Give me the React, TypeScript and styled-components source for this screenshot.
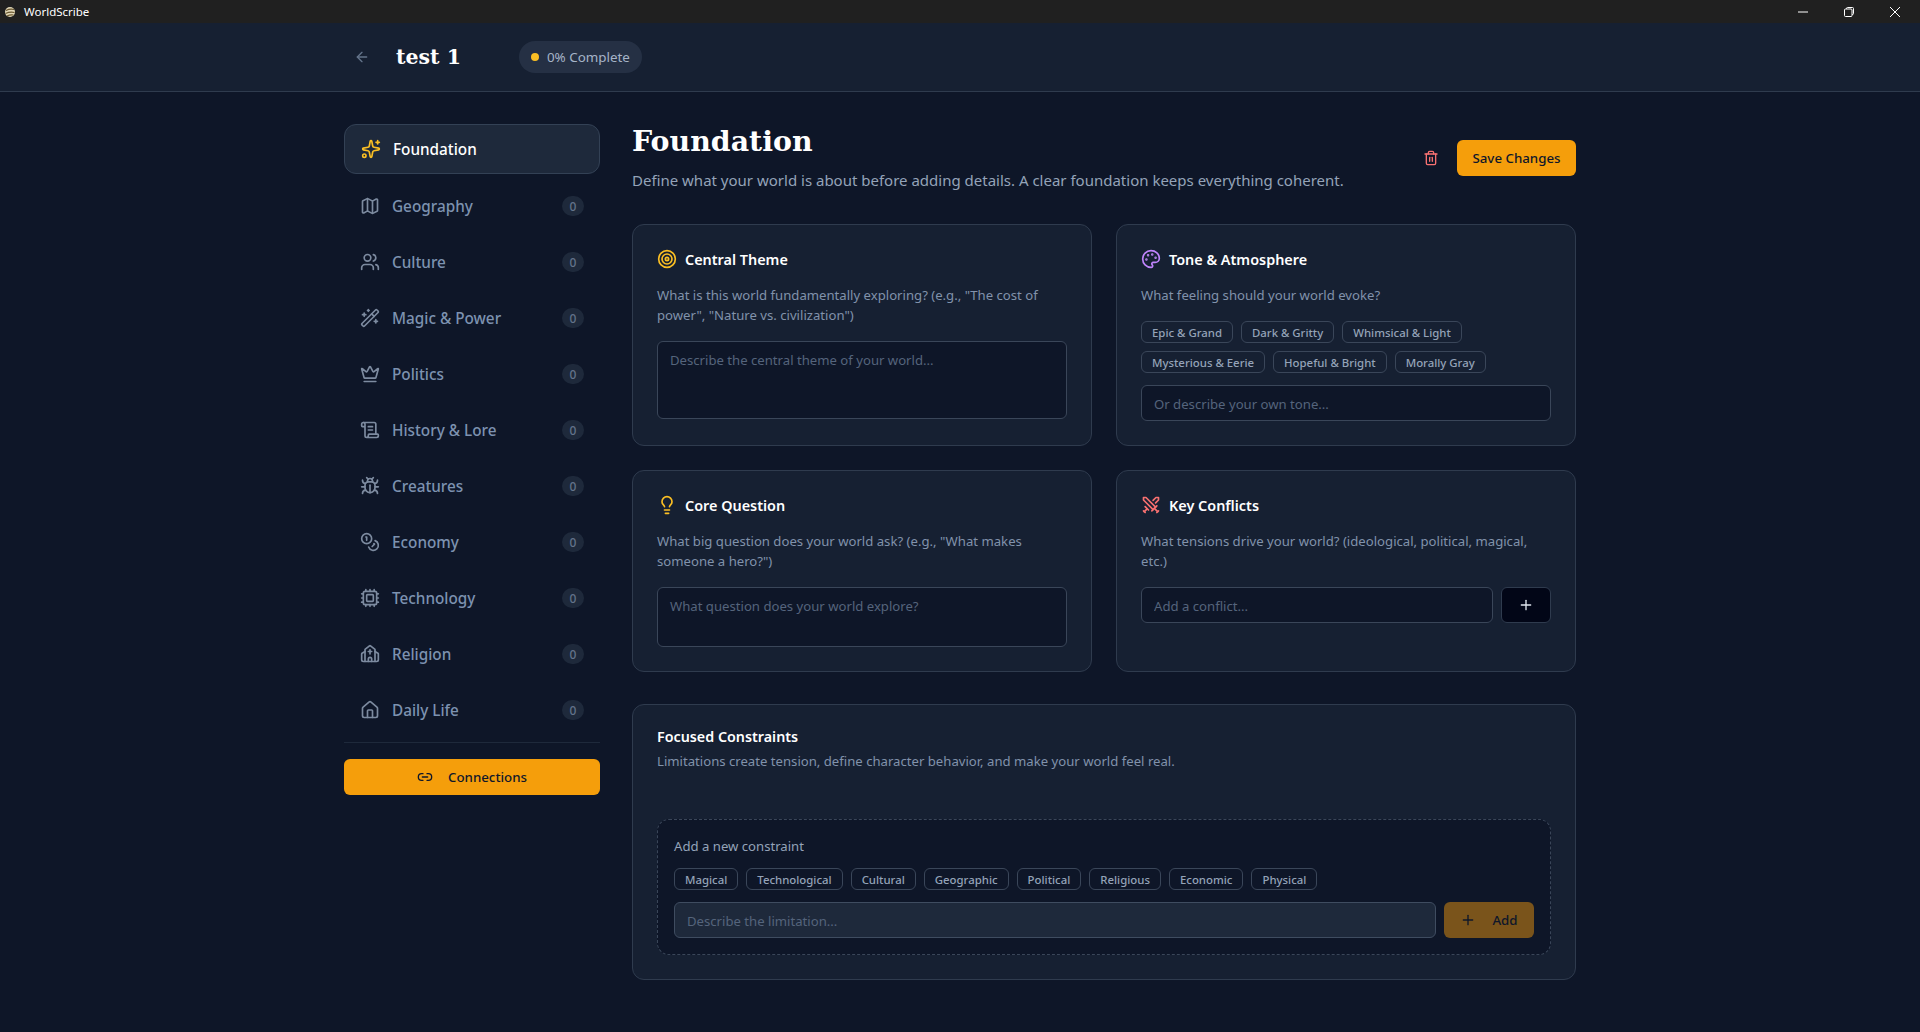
import React from 'react';
import styled, { createGlobalStyle } from 'styled-components';
import {
  ArrowLeft, Sparkles, Map, Users, WandSparkles, Crown, ScrollText, Bug, Coins, Cpu, Church, House,
  Link2, Target, Palette, Lightbulb, Swords, Plus, Trash2,
} from 'lucide-react';

const sans = `"Noto Sans", "Open Sans", sans-serif`;
const serif = `"DejaVu Serif", "Liberation Serif", serif`;

const Global = createGlobalStyle`
  html, body { margin: 0; height: 100%; background: #0e1628; }
  * { box-sizing: border-box; }
  body { font-family: ${sans}; overflow: hidden; }
  input::placeholder, textarea::placeholder { color: #55647c; opacity: 1; }
`;

const Shell = styled.div`
  height: 100vh;
  display: flex;
  flex-direction: column;
  background: #0e1628;
`;

const TitleBar = styled.div`
  height: 23px;
  flex: none;
  background: #202020;
  display: flex;
  align-items: center;
  padding: 0 2px 0 4px;
  color: #fff;
  font-size: 11.5px;
`;

const AppName = styled.span`
  margin-left: 8px;
  flex: 1;
`;

const WinButton = styled.div`
  width: 46px;
  height: 23px;
  display: flex;
  align-items: center;
  justify-content: center;
`;

const Header = styled.header`
  height: 69px;
  flex: none;
  background: #162032;
  border-bottom: 1px solid #2f3b4e;
  display: flex;
  justify-content: center;
`;

const HeaderInner = styled.div`
  width: 1232px;
  display: flex;
  align-items: center;
  padding-left: 10px;
`;

const BackIcon = styled(ArrowLeft)`
  color: #64748b;
`;

const WorldTitle = styled.h1`
  margin: 0 0 0 26px;
  font-family: ${serif};
  font-size: 20.5px;
  font-weight: 700;
  color: #fff;
`;

const ProgressPill = styled.div`
  margin-left: 58px;
  height: 32px;
  width: 123px;
  border-radius: 16px;
  background: #253044;
  display: flex;
  align-items: center;
  gap: 8px;
  padding-left: 12px;
  color: #a5b4c8;
  font-size: 13.4px;
`;

const Dot = styled.span`
  width: 8px;
  height: 8px;
  border-radius: 50%;
  background: #fbbf24;
`;

const Body = styled.div`
  width: 1232px;
  margin: 32px auto 0;
  display: grid;
  grid-template-columns: 256px 944px;
  gap: 32px;
`;

const Sidebar = styled.nav`
  display: flex;
  flex-direction: column;
  gap: 8px;
`;

const NavItem = styled.div<{ $active?: boolean }>`
  height: ${p => (p.$active ? '50px' : '48px')};
  border-radius: 12px;
  display: flex;
  align-items: center;
  gap: 12px;
  padding: 0 16px;
  font-size: 15.3px;
  font-weight: 500;
  color: ${p => (p.$active ? '#fff' : '#7d92b0')};
  background: ${p => (p.$active ? '#1e293b' : 'transparent')};
  border: ${p => (p.$active ? '1px solid #334155' : 'none')};
  svg { flex: none; color: ${p => (p.$active ? '#fbbf24' : '#7d8ba0')}; }
`;

const NavLabel = styled.span`
  flex: 1;
`;

const CountBadge = styled.span`
  width: 22px;
  height: 20px;
  border-radius: 10px;
  background: #1e293b;
  color: #64748b;
  font-size: 12px;
  display: flex;
  align-items: center;
  justify-content: center;
`;

const SideDivider = styled.div`
  height: 1px;
  background: #1e293b;
  margin: 0 0 8px;
`;

const PrimaryButton = styled.button`
  height: 36px;
  border: none;
  border-radius: 6px;
  background: #f59e0b;
  color: #0f172a;
  font-family: ${sans};
  font-size: 13.3px;
  font-weight: 500;
  display: flex;
  align-items: center;
  justify-content: center;
`;

const ConnectionsButton = styled(PrimaryButton)`
  gap: 15px;
`;

const Main = styled.main`
  display: flex;
  flex-direction: column;
`;

const PageHead = styled.div`
  height: 100px;
  display: flex;
  justify-content: space-between;
`;

const PageTitle = styled.h2`
  margin: 0;
  font-family: ${serif};
  font-size: 28.4px;
  line-height: 35px;
  font-weight: 700;
  color: #fff;
`;

const PageSub = styled.p`
  margin: 9px 0 0;
  font-size: 15px;
  line-height: 24px;
  color: #94a3b8;
`;

const PageActions = styled.div`
  display: flex;
  align-items: center;
  gap: 18px;
  height: 36px;
  margin-top: 16px;
`;

const SaveButton = styled(PrimaryButton)`
  width: 119px;
`;

const TrashIcon = styled(Trash2)`
  color: #f87171;
`;

const CardGrid = styled.div`
  display: grid;
  grid-template-columns: 460px 460px;
  gap: 24px;
`;

const Card = styled.section`
  background: #162032;
  border: 1px solid #2f3b4e;
  border-radius: 12px;
  padding: 24px;
`;

const CardTitle = styled.div`
  display: flex;
  align-items: center;
  gap: 8px;
  height: 20px;
  font-size: 14.4px;
  font-weight: 600;
  color: #fff;
`;

const CardDesc = styled.p`
  margin: 16px 0 16px;
  font-size: 13.15px;
  line-height: 20px;
  color: #8192ab;
`;

const Area = styled.textarea<{ $h: number }>`
  display: block;
  width: 100%;
  height: ${p => p.$h}px;
  resize: none;
  background: #0e1628;
  border: 1px solid #3a4659;
  border-radius: 6px;
  padding: 8px 12px;
  font-family: ${sans};
  font-size: 13.15px;
  line-height: 20px;
`;

const TextInput = styled.input`
  display: block;
  width: 100%;
  height: 36px;
  background: #0e1628;
  border: 1px solid #3a4659;
  border-radius: 6px;
  padding: 1px 12px 0;
  font-family: ${sans};
  font-size: 13.15px;
`;

const Chips = styled.div`
  display: flex;
  flex-wrap: wrap;
  gap: 8px;
  margin-bottom: 12px;
`;

const Chip = styled.span`
  height: 22px;
  padding: 0 10px;
  border: 1px solid #3a4659;
  border-radius: 6px;
  font-size: 11.4px;
  font-weight: 500;
  color: #94a3b8;
  display: flex;
  align-items: center;
`;

const InputRow = styled.div`
  display: flex;
  gap: 8px;
`;

const IconButton = styled.button`
  flex: none;
  width: 50px;
  height: 36px;
  background: #020617;
  border: 1px solid #2f3b4e;
  border-radius: 6px;
  color: #e2e8f0;
  display: flex;
  align-items: center;
  justify-content: center;
`;

const ConstraintCard = styled(Card)`
  margin-top: 32px;
`;

const ConstraintTitle = styled.div`
  font-size: 14.3px;
  font-weight: 600;
  line-height: 16px;
  margin-bottom: 6px;
  color: #fff;
`;

const ConstraintDesc = styled.p`
  margin: 0 0 48px;
  font-size: 13.15px;
  line-height: 20px;
  color: #8192ab;
`;

const DashedBox = styled.div`
  background: #0e1628;
  border: 1px dashed #3a4659;
  border-radius: 12px;
  padding: 16px;
`;

const BoxLabel = styled.div`
  font-size: 13.15px;
  line-height: 20px;
  color: #94a3b8;
  margin-bottom: 12px;
`;

const FilledInput = styled(TextInput)`
  flex: 1;
  background: #1e293b;
  border-color: #3f4c60;
`;

const AddButton = styled.button`
  flex: none;
  width: 90px;
  height: 36px;
  border: none;
  border-radius: 6px;
  background: #7a541b;
  color: #0f172a;
  font-family: ${sans};
  font-size: 13.3px;
  font-weight: 500;
  display: flex;
  align-items: center;
  justify-content: center;
  gap: 16px;
`;

const navItems = [
  { label: 'Geography', Icon: Map },
  { label: 'Culture', Icon: Users },
  { label: 'Magic & Power', Icon: WandSparkles },
  { label: 'Politics', Icon: Crown },
  { label: 'History & Lore', Icon: ScrollText },
  { label: 'Creatures', Icon: Bug },
  { label: 'Economy', Icon: Coins },
  { label: 'Technology', Icon: Cpu },
  { label: 'Religion', Icon: Church },
  { label: 'Daily Life', Icon: House },
];

const tones = ['Epic & Grand', 'Dark & Gritty', 'Whimsical & Light', 'Mysterious & Eerie', 'Hopeful & Bright', 'Morally Gray'];
const kinds = ['Magical', 'Technological', 'Cultural', 'Geographic', 'Political', 'Religious', 'Economic', 'Physical'];

export default function App() {
  return (
    <Shell>
      <Global />
      <TitleBar>
        <svg width="12" height="12" viewBox="0 0 12 12">
          <circle cx="6" cy="6" r="5" fill="#e2d8b8" />
          <path d="M2 4.5 Q6 2.5 10 3.5 M1.5 7.5 Q6 5.5 10.5 6.5 M3 10 Q6 8.5 9.5 9" stroke="#6a5830" strokeWidth="1.1" fill="none" />
        </svg>
        <AppName>WorldScribe</AppName>
        <WinButton>
          <svg width="10" height="10" viewBox="0 0 10 10"><path d="M0 5h10" stroke="#fff" /></svg>
        </WinButton>
        <WinButton>
          <svg width="10" height="10" viewBox="0 0 10 10" fill="none" stroke="#fff">
            <rect x="0.5" y="2" width="7.5" height="7.5" rx="1" />
            <path d="M2.5 2V1.5a1 1 0 0 1 1-1h5a1 1 0 0 1 1 1v5a1 1 0 0 1-1 1H8" />
          </svg>
        </WinButton>
        <WinButton>
          <svg width="10" height="10" viewBox="0 0 10 10"><path d="M0 0l10 10M10 0L0 10" stroke="#fff" /></svg>
        </WinButton>
      </TitleBar>
      <Header>
        <HeaderInner>
          <BackIcon size={16} />
          <WorldTitle>test 1</WorldTitle>
          <ProgressPill><Dot />0% Complete</ProgressPill>
        </HeaderInner>
      </Header>
      <Body>
        <Sidebar>
          <NavItem $active>
            <Sparkles size={20} />
            <NavLabel>Foundation</NavLabel>
          </NavItem>
          {navItems.map(({ label, Icon }) => (
            <NavItem key={label}>
              <Icon size={20} />
              <NavLabel>{label}</NavLabel>
              <CountBadge>0</CountBadge>
            </NavItem>
          ))}
          <SideDivider />
          <ConnectionsButton><Link2 size={16} />Connections</ConnectionsButton>
        </Sidebar>
        <Main>
          <PageHead>
            <div>
              <PageTitle>Foundation</PageTitle>
              <PageSub>Define what your world is about before adding details. A clear foundation keeps everything coherent.</PageSub>
            </div>
            <PageActions>
              <TrashIcon size={16} />
              <SaveButton>Save Changes</SaveButton>
            </PageActions>
          </PageHead>
          <CardGrid>
            <Card>
              <CardTitle><Target size={20} color="#fbbf24" />Central Theme</CardTitle>
              <CardDesc>What is this world fundamentally exploring? (e.g., "The cost of power", "Nature vs. civilization")</CardDesc>
              <Area $h={78} placeholder="Describe the central theme of your world..." />
            </Card>
            <Card>
              <CardTitle><Palette size={20} color="#c084fc" />Tone &amp; Atmosphere</CardTitle>
              <CardDesc>What feeling should your world evoke?</CardDesc>
              <Chips>{tones.map(t => <Chip key={t}>{t}</Chip>)}</Chips>
              <TextInput placeholder="Or describe your own tone..." />
            </Card>
            <Card>
              <CardTitle><Lightbulb size={20} color="#fbbf24" />Core Question</CardTitle>
              <CardDesc>What big question does your world ask? (e.g., "What makes someone a hero?")</CardDesc>
              <Area $h={60} placeholder="What question does your world explore?" />
            </Card>
            <Card>
              <CardTitle><Swords size={20} color="#f87171" />Key Conflicts</CardTitle>
              <CardDesc>What tensions drive your world? (ideological, political, magical, etc.)</CardDesc>
              <InputRow>
                <TextInput placeholder="Add a conflict..." />
                <IconButton><Plus size={16} /></IconButton>
              </InputRow>
            </Card>
          </CardGrid>
          <ConstraintCard>
            <ConstraintTitle>Focused Constraints</ConstraintTitle>
            <ConstraintDesc>Limitations create tension, define character behavior, and make your world feel real.</ConstraintDesc>
            <DashedBox>
              <BoxLabel>Add a new constraint</BoxLabel>
              <Chips>{kinds.map(k => <Chip key={k}>{k}</Chip>)}</Chips>
              <InputRow>
                <FilledInput placeholder="Describe the limitation..." />
                <AddButton><Plus size={16} />Add</AddButton>
              </InputRow>
            </DashedBox>
          </ConstraintCard>
        </Main>
      </Body>
    </Shell>
  );
}
